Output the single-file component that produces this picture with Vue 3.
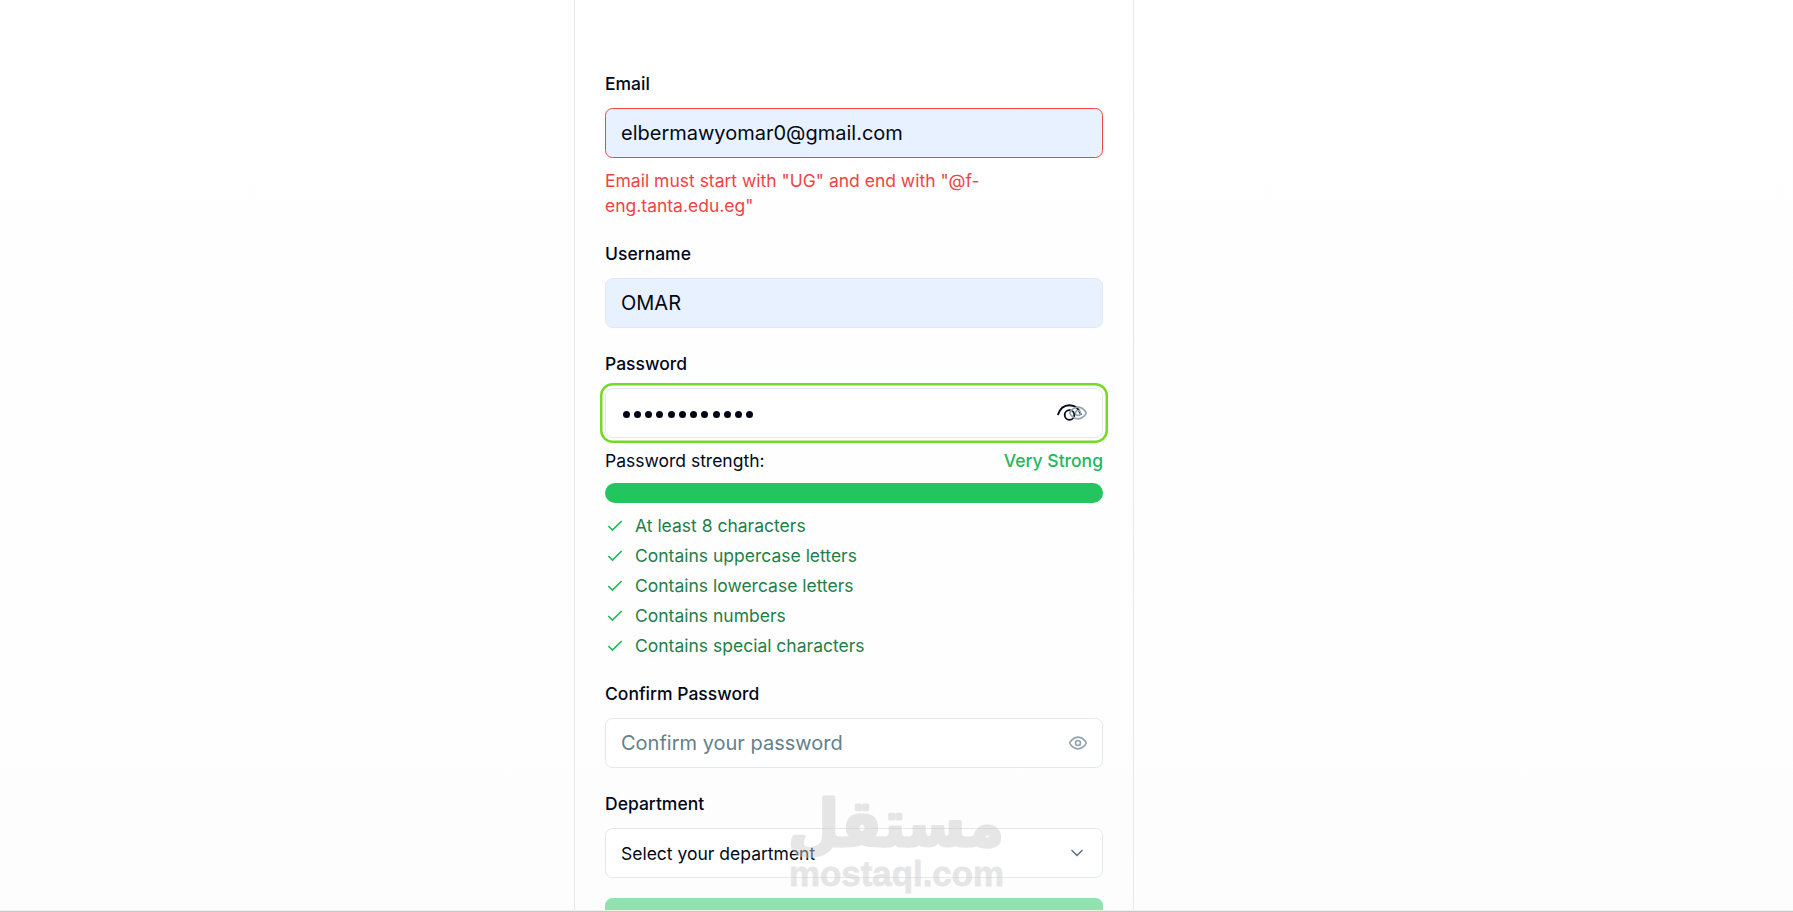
<template>
  <div class="register-page">
    <div class="register-card">
      <div class="form-item">
        <label class="form-label" for="email">Email</label>
        <input id="email" v-model="form.email" class="form-input autofill invalid" type="text" />
        <p class="error-text">{{ emailError }}</p>
      </div>

      <div class="form-item">
        <label class="form-label" for="username">Username</label>
        <input id="username" v-model="form.username" class="form-input autofill" type="text" />
      </div>

      <div class="form-item">
        <label class="form-label" for="password">Password</label>
        <div class="input-wrap">
          <div class="form-input focused">
            <span v-for="n in form.passwordLength" :key="n" class="dot"></span>
          </div>
          <svg class="reveal-icon" viewBox="0 0 30 20" fill="none">
            <path d="M1.8 11C6 -2 21 -2 25 11" />
            <circle cx="13.5" cy="11" r="4.8" />
          </svg>
          <svg class="eye-icon" viewBox="0 0 24 24" fill="none">
            <path d="M2 12s3-7 10-7 10 7 10 7-3 7-10 7-10-7-10-7Z" />
            <circle cx="12" cy="12" r="3" />
          </svg>
        </div>
        <div class="strength-row">
          <span>Password strength:</span>
          <span class="strength-value">Very Strong</span>
        </div>
        <div class="strength-bar">
          <div class="strength-fill" :style="{ width: strength + '%' }"></div>
        </div>
        <ul class="rules">
          <li v-for="rule in rules" :key="rule" class="rule">
            <svg class="check-icon" viewBox="0 0 24 24" fill="none">
              <path d="M20 6 9 17l-5-5" />
            </svg>
            <span>{{ rule }}</span>
          </li>
        </ul>
      </div>

      <div class="form-item">
        <label class="form-label" for="confirm">Confirm Password</label>
        <div class="input-wrap">
          <input id="confirm" v-model="form.confirm" class="form-input" type="password" placeholder="Confirm your password" />
          <svg class="eye-icon" viewBox="0 0 24 24" fill="none">
            <path d="M2 12s3-7 10-7 10 7 10 7-3 7-10 7-10-7-10-7Z" />
            <circle cx="12" cy="12" r="3" />
          </svg>
        </div>
      </div>

      <div class="form-item">
        <span class="form-label">Department</span>
        <button type="button" class="form-input select-trigger">
          <span>Select your department</span>
          <svg class="chevron-icon" viewBox="0 0 24 24" fill="none">
            <path d="m6 9 6 6 6-6" />
          </svg>
        </button>
      </div>

      <button type="submit" class="submit-btn" disabled></button>
    </div>

    <svg class="watermark" viewBox="0 0 220 120">
      <text class="mark-ar" x="109" y="56" text-anchor="middle" textLength="216" lengthAdjust="spacingAndGlyphs">مستقل</text>
      <text class="mark-en" x="2" y="96" textLength="215" lengthAdjust="spacingAndGlyphs">mostaql.com</text>
    </svg>
    <div class="bottom-line"></div>
  </div>
</template>

<script setup>
import { reactive, ref } from 'vue'

const form = reactive({
  email: 'elbermawyomar0@gmail.com',
  username: 'OMAR',
  passwordLength: 12,
  confirm: ''
})

const emailError = 'Email must start with "UG" and end with "@f-eng.tanta.edu.eg"'

const strength = ref(100)

const rules = [
  'At least 8 characters',
  'Contains uppercase letters',
  'Contains lowercase letters',
  'Contains numbers',
  'Contains special characters'
]
</script>

<style>
body {
  margin: 0;
  overflow: hidden;
}
</style>

<style scoped>
.register-page {
  position: relative;
  box-sizing: border-box;
  height: 912px;
  overflow: hidden;
  display: flex;
  justify-content: center;
  padding-right: 85px;
  background: linear-gradient(180deg, #ffffff 0%, #fdfdfd 100%);
  font-family: Inter, 'Liberation Sans', sans-serif;
  font-size: 17.5px;
  line-height: 25px;
  color: #020817;
}

.register-card {
  box-sizing: border-box;
  width: 560px;
  height: 1000px;
  flex-shrink: 0;
  padding: 68px 30px 0;
  border: 1px solid #e2e8f0;
  border-top: 0;
  display: flex;
  flex-direction: column;
  gap: 20px;
}

.form-item {
  display: flex;
  flex-direction: column;
  gap: 10px;
}

.form-label {
  box-sizing: border-box;
  height: 30px;
  padding-top: 1px;
  line-height: 30px;
  font-weight: 500;
}

.form-input {
  box-sizing: border-box;
  width: 100%;
  height: 50px;
  padding: 0 15px;
  border: 1px solid #e2e8f0;
  border-radius: 7.5px;
  background: #ffffff;
  font-family: inherit;
  font-size: 20px;
  color: #020817;
  outline: none;
}

.form-input::placeholder {
  color: #64808b;
  opacity: 1;
}

.autofill {
  background: #e7f1ff;
}

.invalid {
  border-color: #ef4444;
}

.focused {
  display: flex;
  align-items: center;
  gap: 4.25px;
  padding-left: 16.5px;
  padding-top: 2px;
  box-shadow: 0 0 0 2.5px #ffffff, 0 0 0 5px #76d926;
}

.dot {
  width: 7px;
  height: 7px;
  border-radius: 50%;
  background: #020817;
}

.error-text {
  margin: 0;
  width: 400px;
  color: #ef4444;
}

.input-wrap {
  position: relative;
}

.eye-icon {
  position: absolute;
  top: 15px;
  right: 15px;
  width: 20px;
  height: 20px;
  stroke: #94a3b0;
  stroke-width: 2;
  stroke-linecap: round;
  stroke-linejoin: round;
}

.reveal-icon {
  position: absolute;
  top: 16px;
  right: 17px;
  width: 30px;
  height: 20px;
  stroke: #020817;
  stroke-width: 1.8;
}

.strength-row {
  display: flex;
  justify-content: space-between;
}

.strength-value {
  font-weight: 500;
  color: #22b860;
}

.strength-bar {
  height: 20px;
  border-radius: 10px;
  overflow: hidden;
  background: #f1f5f9;
}

.strength-fill {
  height: 100%;
  background: #22c55e;
}

.rules {
  margin: 0;
  padding: 0;
  list-style: none;
  display: flex;
  flex-direction: column;
  gap: 5px;
}

.rule {
  display: flex;
  align-items: center;
  gap: 10px;
  color: #1f7f48;
}

.check-icon {
  width: 20px;
  height: 20px;
  stroke: #22b85a;
  stroke-width: 2;
}

.select-trigger {
  display: flex;
  align-items: center;
  justify-content: space-between;
  font-size: 17.5px;
}

.chevron-icon {
  width: 20px;
  height: 20px;
  stroke: #64748b;
  stroke-width: 2;
  stroke-linecap: round;
  stroke-linejoin: round;
}

.submit-btn {
  height: 50px;
  flex-shrink: 0;
  border: 0;
  border-radius: 7.5px;
  background: #90e2ae;
}

.watermark {
  position: absolute;
  left: 787px;
  top: 790px;
  width: 220px;
  height: 120px;
  overflow: visible;
  fill: #cdcdcd;
  stroke: #cdcdcd;
  stroke-linejoin: round;
  opacity: 0.48;
  pointer-events: none;
}

.mark-ar {
  font-family: 'DejaVu Sans', sans-serif;
  font-weight: 700;
  font-size: 65px;
  stroke-width: 3;
}

.mark-en {
  font-family: 'Liberation Sans', sans-serif;
  font-weight: 700;
  font-size: 35px;
  stroke-width: 0.8;
}

.bottom-line {
  position: absolute;
  left: 0;
  right: 0;
  bottom: 0;
  height: 1px;
  border-top: 1px solid #eeeeea;
  background: #c8c8c4;
}
</style>
